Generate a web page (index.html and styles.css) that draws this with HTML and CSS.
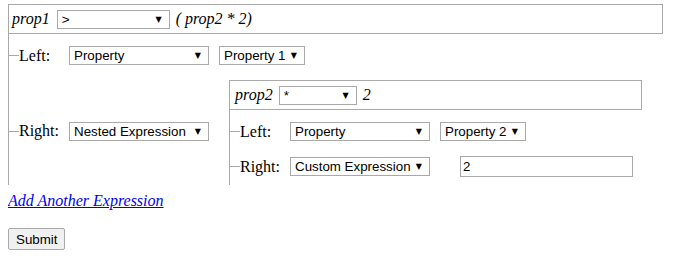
FILE: index.html
```html
<!DOCTYPE html>
<html lang="en">
<head>
    <meta charset="UTF-8">
    <meta name="viewport" content="width=device-width, initial-scale=1.0">
    <title>Expression Builder</title>
    <link rel="stylesheet" href="styles.css">
</head>
<body>
    <form class="builder">
        <div class="expr expr-outer">
            <div class="expr-head">
                <span class="prop-name">prop1</span>
                <span class="select-wrap op-outer"><select class="select"><option>&gt;</option></select></span>
                <span class="summary">( prop2 * 2)</span>
            </div>
            <div class="branches">
                <div class="branch">
                    <span class="tick"></span>
                    <span class="side-label">Left:</span>
                    <span class="select-wrap kind"><select class="select"><option>Property</option></select></span>
                    <span class="select-wrap prop"><select class="select"><option>Property 1</option></select></span>
                </div>
                <div class="branch branch-nested">
                    <span class="tick"></span>
                    <span class="side-label">Right:</span>
                    <span class="select-wrap kind"><select class="select"><option>Nested Expression</option></select></span>

                    <!-- nested expression -->
                    <div class="expr expr-inner">
                        <div class="expr-head">
                            <span class="prop-name">prop2</span>
                            <span class="select-wrap op-inner"><select class="select"><option>*</option></select></span>
                            <span class="summary">2</span>
                        </div>
                        <div class="branches">
                            <div class="branch">
                                <span class="tick"></span>
                                <span class="side-label">Left:</span>
                                <span class="select-wrap kind"><select class="select"><option>Property</option></select></span>
                                <span class="select-wrap prop"><select class="select"><option>Property 2</option></select></span>
                            </div>
                            <div class="branch branch-last">
                                <span class="tick"></span>
                                <span class="side-label">Right:</span>
                                <span class="select-wrap kind"><select class="select"><option>Custom Expression</option></select></span>
                                <input type="text" class="custom-value" value="2">
                            </div>
                        </div>
                    </div>
                </div>
            </div>
        </div>

        <div class="add-row">
            <a href="#" class="add-link">Add Another Expression</a>
        </div>
        <button type="button" class="submit">Submit</button>
    </form>
</body>
</html>
```

FILE: styles.css
```css
body {
    font-family: "Liberation Serif", "Times New Roman", serif;
    font-size: 16px;
    color: #000;
    background-color: #fff;
    margin: 4px 8px 8px;
}
.expr-outer {
    width: 655px;
}
.expr-inner {
    width: 413px;
    margin-left: 10px;
}
.expr-head {
    display: flex;
    align-items: center;
    height: 30px;
    box-sizing: border-box;
    border: 1px solid #a9a9a9;
    padding: 0 4px 0 3px;
}
.expr-inner .expr-head {
    padding-left: 5px;
}
.prop-name {
    font-style: italic;
    margin-right: 7px;
}
.expr-inner .prop-name {
    margin-right: 6px;
}
.summary {
    font-style: italic;
    margin-left: 6px;
}
.branches {
    border-left: 1px solid #a9a9a9;
}
.branch {
    display: flex;
    align-items: center;
    padding: 12px 0 4px;
}
.branch-nested {
    padding: 11px 0 0;
}
.branch-nested > .tick,
.branch-nested > .side-label,
.branch-nested > .select-wrap {
    margin-bottom: 3px;
}
.branch-last {
    padding: 11px 0 8px;
}
.tick {
    width: 10px;
    height: 1px;
    background-color: #a9a9a9;
}
.side-label {
    width: 50px;
}
.select-wrap {
    position: relative;
    display: inline-block;
}
.select-wrap::after {
    content: "\25BC";
    position: absolute;
    right: 8px;
    top: 5px;
    font-family: "DejaVu Sans", sans-serif;
    font-size: 8px;
    line-height: 9px;
    color: #000;
    pointer-events: none;
}
.select {
    -webkit-appearance: none;
    appearance: none;
    display: block;
    height: 19px;
    box-sizing: border-box;
    border: 1px solid #a9a9a9;
    border-radius: 0;
    background-color: #fff;
    color: #000;
    font-family: "Liberation Sans", Arial, sans-serif;
    font-size: 13.33px;
    padding: 0 0 0 4px;
    margin: 0;
}
.op-outer .select { width: 113px; }
.op-inner .select { width: 78px; }
.kind .select { width: 140px; }
.prop .select { width: 86px; }
.kind {
    margin-right: 10px;
}
.custom-value {
    width: 173px;
    height: 21px;
    box-sizing: border-box;
    margin: 0 0 0 20px;
    border: 1px solid #a9a9a9;
    padding: 0 2px;
    font-family: "Liberation Sans", Arial, sans-serif;
    font-size: 13.33px;
    color: #000;
}
.add-row {
    margin-top: 7px;
}
.add-link {
    color: #0000ee;
    font-style: italic;
}
.submit {
    margin-top: 18px;
    height: 22px;
    padding: 0 7px;
    border: 1px solid #a9a9a9;
    border-radius: 2px;
    background-color: #f0f0f0;
    color: #000;
    font-family: "Liberation Sans", Arial, sans-serif;
    font-size: 13.33px;
}
```
